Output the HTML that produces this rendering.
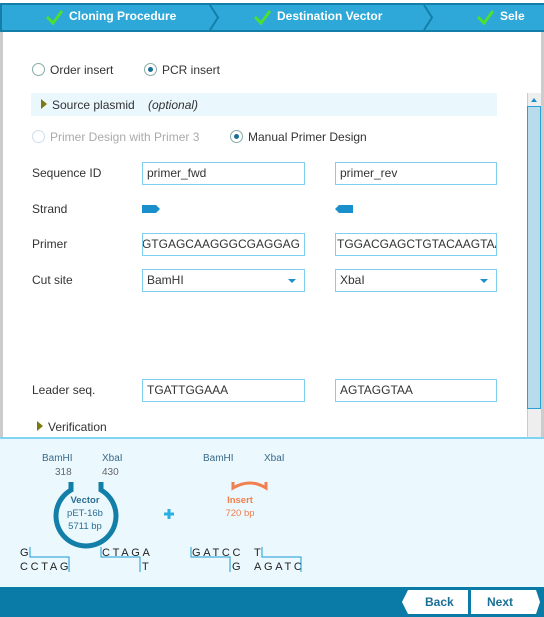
<!DOCTYPE html><html><head><style>
*{box-sizing:border-box;margin:0;padding:0}
body{width:544px;height:617px;position:relative;overflow:hidden;background:#fff;font-family:"Liberation Sans",sans-serif;font-size:12px;color:#333}
.a{position:absolute}
.inp{position:absolute;height:23px;border:1px solid #7fd0f0;background:#fff;padding:3px 4px;font-size:12px;white-space:nowrap;overflow:hidden;line-height:15px}
.radio{position:absolute;width:13px;height:13px;border:1px solid #8aa;border-radius:50%;background:#fff}
.radio.on::after{content:"";position:absolute;left:3px;top:3px;width:5px;height:5px;border-radius:50%;background:#1a6f94}
.dd{position:absolute;right:8px;top:9px;border-left:4px solid transparent;border-right:4px solid transparent;border-top:4px solid #1e8fcc}
.seq{position:absolute;font-size:11px;letter-spacing:2.7px;color:#222}
.lb{position:absolute;font-size:10px;color:#3a6a8a}
.hd{position:absolute;top:9px;color:#fff;font-weight:bold;font-size:12px}
</style></head><body>
<div class="a" style="left:0;top:3px;width:544px;height:29px;background:#2ea8d8;border:2px solid #137fa8;border-right:none"></div>
<svg class="a" style="left:0;top:3px" width="544" height="29">
<path d="M210 2 L218 14.5 L210 27 M424 2 L432 14.5 L424 27" stroke="#137fa8" stroke-width="2" fill="none"/>
<path d="M47 14 L53 20 L62 8 M255 14 L261 20 L270 8 M478 14 L484 20 L493 8" stroke="#4ee030" stroke-width="3" fill="none"/>
</svg>
<div class="hd" style="left:69px">Cloning Procedure</div>
<div class="hd" style="left:277px">Destination Vector</div>
<div class="hd" style="left:500px">Sele</div>
<div class="a" style="left:0;top:32px;width:3px;height:405px;background:#ccc"></div>
<div class="a" style="left:541px;top:32px;width:3px;height:405px;background:#ccc"></div>

<div class="radio" style="left:32px;top:63px"></div><div class="a" style="left:50px;top:63px">Order insert</div>
<div class="radio on" style="left:144px;top:63px"></div><div class="a" style="left:162px;top:63px">PCR insert</div>

<div class="a" style="left:31px;top:93px;width:466px;height:23px;background:#eaf7fc"></div>
<div class="a" style="left:41px;top:99px;border-top:5px solid transparent;border-bottom:5px solid transparent;border-left:6px solid #7a7a10"></div>
<div class="a" style="left:52px;top:98px">Source plasmid</div>
<div class="a" style="left:148px;top:98px;font-style:italic">(optional)</div>

<div class="radio" style="left:32px;top:130px;border-color:#cde"></div><div class="a" style="left:50px;top:130px;color:#aaa">Primer Design with Primer 3</div>
<div class="radio on" style="left:230px;top:130px"></div><div class="a" style="left:248px;top:130px">Manual Primer Design</div>

<div class="a" style="left:32px;top:166px">Sequence ID</div>
<div class="inp" style="left:142px;top:162px;width:163px">primer_fwd</div>
<div class="inp" style="left:335px;top:162px;width:162px">primer_rev</div>
<div class="a" style="left:32px;top:202px">Strand</div>
<svg class="a" style="left:142px;top:204px" width="20" height="10"><path d="M0 1H14L18 5L14 9H0Z" fill="#1a8fcc"/></svg>
<svg class="a" style="left:334px;top:204px" width="20" height="10"><path d="M19 1H5L1 5L5 9H19Z" fill="#1a8fcc"/></svg>
<div class="a" style="left:32px;top:237px">Primer</div>
<div class="inp" style="left:142px;top:233px;width:163px;direction:rtl;text-align:left"><span style="direction:ltr;unicode-bidi:bidi-override">ATGGTGAGCAAGGGCGAGGAG</span></div>
<div class="inp" style="left:335px;top:233px;width:162px;padding-left:1px">TGGACGAGCTGTACAAGTAA</div>
<div class="a" style="left:32px;top:273px">Cut site</div>
<div class="inp" style="left:142px;top:269px;width:163px">BamHI<div class="dd"></div></div>
<div class="inp" style="left:335px;top:269px;width:162px">XbaI<div class="dd"></div></div>

<div class="a" style="left:32px;top:383px">Leader seq.</div>
<div class="inp" style="left:142px;top:379px;width:163px">TGATTGGAAA</div>
<div class="inp" style="left:335px;top:379px;width:162px">AGTAGGTAA</div>
<div class="a" style="left:37px;top:421px;border-top:5px solid transparent;border-bottom:5px solid transparent;border-left:6px solid #7a7a10"></div>
<div class="a" style="left:48px;top:420px">Verification</div>

<div class="a" style="left:527px;top:93px;width:14px;height:344px;background:#eee;border-left:1px solid #ccc"></div>
<div class="a" style="left:531px;top:98px;border-left:3px solid transparent;border-right:3px solid transparent;border-bottom:4px solid #1a8fcc"></div>
<div class="a" style="left:527px;top:106px;width:14px;height:303px;background:#b9dcec;border:1px solid #2aa0d8"></div>

<div class="a" style="left:0;top:437px;width:544px;height:150px;background:#ebf8fd;border-top:2px solid #7fd3f3"></div>
<div class="lb" style="left:42px;top:453px">BamHI</div><div class="lb" style="left:102px;top:453px">XbaI</div>
<div class="lb" style="left:55px;top:467px;color:#666">318</div><div class="lb" style="left:102px;top:467px;color:#666">430</div>
<div class="lb" style="left:203px;top:453px">BamHI</div><div class="lb" style="left:264px;top:453px">XbaI</div>
<svg class="a" style="left:50px;top:480px" width="260" height="70">
<path d="M21 2 V10 A30 30 0 1 0 51 10 V2" stroke="#137fa8" stroke-width="5" fill="none"/>
<path d="M183 2 V8 Q200 -2 216 8 V2" stroke="#f08050" stroke-width="3" fill="none"/>
<path d="M114 34 h10 M119 29 v10" stroke="#2ab0e0" stroke-width="3"/>
</svg>
<div class="a" style="left:55px;top:494px;width:60px;text-align:center;font-size:9.5px;color:#2a6f95;line-height:13px"><b>Vector</b><br>pET-16b<br>5711 bp</div>
<div class="a" style="left:210px;top:494px;width:60px;text-align:center;font-size:9.5px;color:#f08050;line-height:13px"><b>Insert</b><br>720 bp</div>
<div class="seq" style="left:20px;top:547px">G</div>
<div class="seq" style="left:20px;top:561px">CCTAG</div>
<div class="seq" style="left:102px;top:547px">CTAGA</div>
<div class="seq" style="left:142px;top:561px">T</div>
<div class="seq" style="left:192px;top:547px">GATCC</div><div class="seq" style="left:254px;top:547px">T</div>
<div class="seq" style="left:232px;top:561px">G</div><div class="seq" style="left:254px;top:561px">AGATC</div>
<svg class="a" style="left:0;top:545px" width="320" height="30">
<path d="M30 2 V12 H69 V27 M101 2 V12 H140 V27 M191 2 V12 H230 V27 M262 2 V12 H301 V27" stroke="#1a9ad8" fill="none"/>
</svg>

<div class="a" style="left:0;top:587px;width:544px;height:30px;background:#0a7aa6"></div>
<svg class="a" style="left:400px;top:589px" width="144" height="26"><path d="M8 1H68V25H8L2 13Z M71 1H136L140 13L136 25H71Z" fill="#fff"/></svg>
<div class="a" style="left:425px;top:595px;font-weight:bold;color:#1a6f94">Back</div>
<div class="a" style="left:487px;top:595px;font-weight:bold;color:#1a6f94">Next</div>
</body></html>
